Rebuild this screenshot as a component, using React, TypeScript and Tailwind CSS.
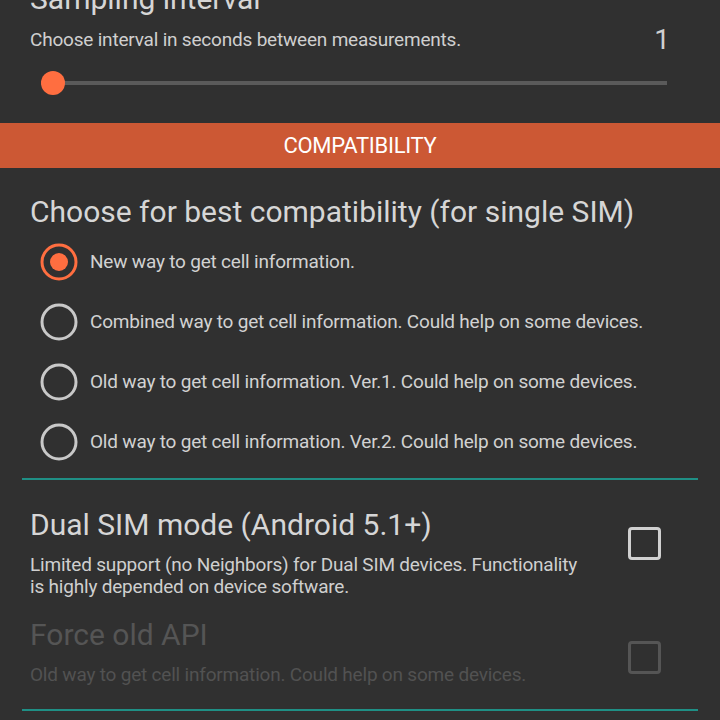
import React from "react";

function Radio({ checked }: { checked?: boolean }) {
  return (
    <svg width="40" height="40" viewBox="0 0 40 40" className="shrink-0">
      <circle cx="20" cy="20" r="17" fill="none" stroke={checked ? "#ff6e40" : "#c8c8c8"} strokeWidth="3" />
      {checked && <circle cx="20" cy="20" r="9" fill="#ff6e40" />}
    </svg>
  );
}

function Checkbox({ disabled }: { disabled?: boolean }) {
  return (
    <div
      className={`w-[33px] h-[33px] rounded-[4px] border-[3px] ${disabled ? "border-[#555555]" : "border-[#d0d0d0]"}`}
    />
  );
}

const options = [
  "New way to get cell information.",
  "Combined way to get cell information. Could help on some devices.",
  "Old way to get cell information. Ver.1. Could help on some devices.",
  "Old way to get cell information. Ver.2. Could help on some devices.",
];

export default function App() {
  return (
    <div
      className="w-[720px] h-[720px] overflow-hidden bg-[#303030] text-[#d4d4d4]"
      style={{ fontFamily: "Roboto, 'Noto Sans', sans-serif" }}
    >
      {/* Sampling interval */}
      <div className="pl-[30px] pr-[22px]">
        <div className="text-[30px] leading-[36px] mt-[-19px] text-[#d6d6d6]">Sampling interval</div>
        <div className="flex items-center justify-between h-[46px]">
          <div className="text-[19px] tracking-[-0.2px] text-[#cfcfcf]">Choose interval in seconds between measurements.</div>
          <div className="text-[28px] leading-[30px] text-[#d0d0d0] mr-[28px]">1</div>
        </div>
        <div className="relative h-[24px] mt-[8px] ml-[11px] mr-[31px] flex items-center">
          <div className="h-[4px] w-full bg-[#5a5a5a]" />
          <div className="absolute left-0 top-[0px] w-[24px] h-[24px] rounded-full bg-[#ff6e40]" />
        </div>
      </div>

      {/* Compatibility band */}
      <div className="mt-[28px] h-[45px] bg-[#cc5834] flex items-center justify-center text-[22px] text-white tracking-[-0.3px]">
        COMPATIBILITY
      </div>

      {/* Radio group */}
      <div className="px-[30px]">
        <div className="text-[30px] leading-[36px] mt-[26px] text-[#d6d6d6]">Choose for best compatibility (for single SIM)</div>
        <div className="flex flex-col mt-[2px] ml-[9px]">
          {options.map((o, i) => (
            <div key={i} className="flex items-center h-[60px] gap-[11px]">
              <Radio checked={i === 0} />
              <span className="text-[19px] tracking-[-0.2px] text-[#d2d2d2]">{o}</span>
            </div>
          ))}
        </div>
      </div>

      {/* Divider */}
      <div className="mx-[22px] mt-[6px] h-[2px] bg-[#1f8f85]" />

      {/* Dual SIM */}
      <div className="flex items-start px-[30px] mt-[27px]">
        <div className="flex-1">
          <div className="text-[30px] leading-[36px] text-[#d6d6d6]">Dual SIM mode (Android 5.1+)</div>
          <div className="text-[19px] tracking-[-0.2px] leading-[22px] text-[#cfcfcf] mt-[11px] w-[560px]">
            Limited support (no Neighbors) for Dual SIM devices. Functionality is highly depended on device software.
          </div>
        </div>
        <div className="mt-[20px] mr-[29px]">
          <Checkbox />
        </div>
      </div>

      {/* Force old API */}
      <div className="flex items-start px-[30px] mt-[19px]">
        <div className="flex-1">
          <div className="text-[30px] leading-[36px] text-[#555555]">Force old API</div>
          <div className="text-[19px] tracking-[-0.2px] leading-[22px] text-[#525252] mt-[11px]">
            Old way to get cell information. Could help on some devices.
          </div>
        </div>
        <div className="mt-[24px] mr-[29px]">
          <Checkbox disabled />
        </div>
      </div>

      <div className="mx-[22px] mt-[23px] h-[2px] bg-[#1f8f85]" />
    </div>
  );
}
